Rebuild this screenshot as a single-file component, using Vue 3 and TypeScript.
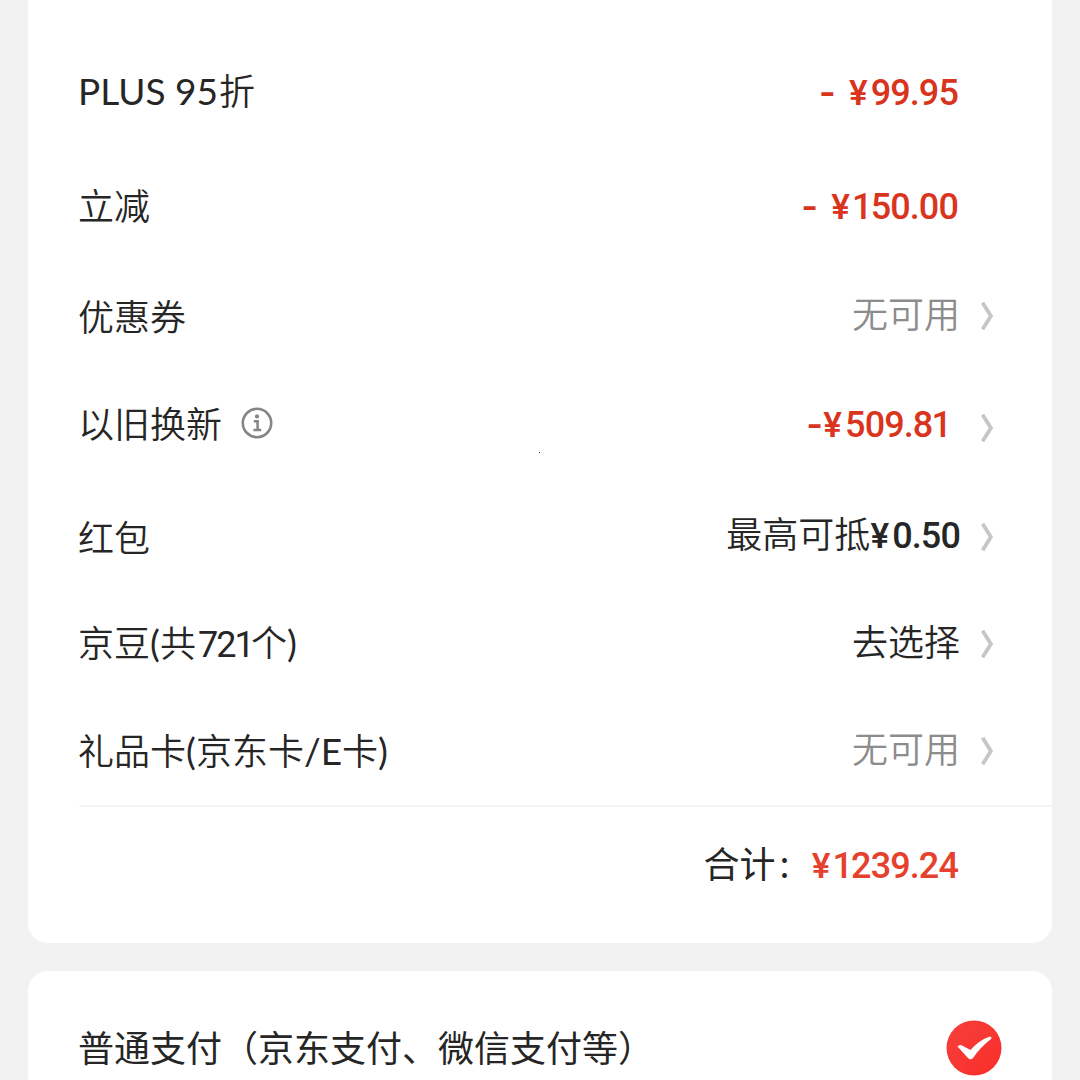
<template>
  <div class="checkout">
    <!-- Price detail -->
    <section class="card detail-card">
      <div v-for="row in rows" :key="row.id" class="row" :class="'row-' + row.id">
        <div class="label">
          <span v-for="(part, i) in row.label" :key="i" :class="part.kind">{{ part.text }}</span>
          <svg v-if="row.info" class="info-icon" viewBox="0 0 32 32" fill="none">
            <circle cx="16" cy="16" r="14.2" stroke="#858585" stroke-width="2.6" />
            <circle cx="16" cy="9.4" r="2.1" fill="#858585" />
            <path d="M12.8 14.2h3.8v8.6M12.4 22.9h7.8" stroke="#858585" stroke-width="2.5" />
          </svg>
        </div>
        <div class="value" :class="row.tone">
          <span v-for="(part, i) in row.value" :key="i" :class="part.kind">{{ part.text }}</span>
        </div>
        <div class="arrow">
          <svg v-if="row.arrow" width="14" height="30" viewBox="0 0 14 30" fill="none">
            <path d="M2.6 1.8L10.9 15L2.6 28.2" stroke="#c6c6c6" stroke-width="3.8" />
          </svg>
        </div>
      </div>

      <!-- Total -->
      <div class="total">
        <span class="total-label">合计</span>
        <span class="colon">:</span>
        <span class="total-price">
          <span v-for="(part, i) in price('¥1239.24')" :key="i" :class="part.kind">{{ part.text }}</span>
        </span>
      </div>
      <span class="speck"></span>
    </section>

    <!-- Payment method -->
    <section class="card pay-card" @click="checked = !checked">
      <span class="pay-name">普通支付（京东支付、微信支付等）</span>
      <svg class="check" viewBox="0 0 56 56">
        <defs>
          <linearGradient id="checkFill" x1="0" y1="0" x2="1" y2="1">
            <stop offset="0" stop-color="#f5403c" />
            <stop offset="1" stop-color="#fb2d29" />
          </linearGradient>
        </defs>
        <circle cx="28" cy="28" r="27.5" :fill="checked ? 'url(#checkFill)' : '#dddddd'" />
        <path
          d="M11.5 26.5Q13.5 24 16 25.5L24.5 30Q33 20.5 43 16.8Q46.5 16 45 19Q34 27.5 27 38Q24.5 40.500 22 38Z"
          fill="#fff"
        />
      </svg>
    </section>
  </div>
</template>

<script setup lang="ts">
import { ref } from 'vue'

interface Part {
  text: string
  kind: string
}

interface Row {
  id: string
  label: Part[]
  value: Part[]
  tone: 'red' | 'gray' | 'dark'
  arrow?: boolean
  info?: boolean
}

const cn = (text: string): Part => ({ text, kind: 'cn' })
const part = (text: string, kind: string): Part => ({ text, kind })

// The yen sign and the digit 1 have their own advance width
const price = (text: string): Part[] =>
  text
    .split(/(¥|1)/)
    .filter(Boolean)
    .map((t) => part(t, t === '¥' ? 'price yen' : t === '1' ? 'price one' : 'price'))

const checked = ref(true)

const rows: Row[] = [
  {
    id: 'plus',
    label: [part('PLUS 95', 'latin'), cn('折')],
    value: [part('-', 'dash'), ...price('¥99.95')],
    tone: 'red'
  },
  {
    id: 'instant',
    label: [cn('立减')],
    value: [part('-', 'dash'), ...price('¥150.00')],
    tone: 'red'
  },
  {
    id: 'coupon',
    label: [cn('优惠券')],
    value: [cn('无可用')],
    tone: 'gray',
    arrow: true
  },
  {
    id: 'tradein',
    label: [cn('以旧换新')],
    value: [part('-', 'dash'), ...price('¥509.81')],
    tone: 'red',
    arrow: true,
    info: true
  },
  {
    id: 'redpacket',
    label: [cn('红包')],
    value: [cn('最高可抵'), ...price('¥0.50')],
    tone: 'dark',
    arrow: true
  },
  {
    id: 'bean',
    label: [cn('京豆'), part('(', 'paren'), cn('共'), part('721', 'digits'), cn('个'), part(')', 'paren')],
    value: [cn('去选择')],
    tone: 'dark',
    arrow: true
  },
  {
    id: 'card',
    label: [
      cn('礼品卡'),
      part('(', 'paren'),
      cn('京东卡'),
      part('/E', 'latin'),
      cn('卡'),
      part(')', 'paren')
    ],
    value: [cn('无可用')],
    tone: 'gray',
    arrow: true
  }
]
</script>

<style>
body {
  background: #f2f2f2;
}
</style>

<style scoped>
.checkout {
  height: 1080px;
  padding: 0 28px;
  box-sizing: border-box;
  overflow: hidden;
  display: flex;
  flex-direction: column;
  gap: 28px;
  background: #f2f2f2;
  color: #262626;
  font-family: 'Noto Sans CJK SC', sans-serif;
  font-size: 36px;
  line-height: 52px;
  white-space: nowrap;
}

.card {
  background: #fff;
  box-sizing: border-box;
  flex-shrink: 0;
}

.detail-card {
  position: relative;
  height: 943px;
  padding: 39px 0 0 50px;
  border-radius: 0 0 20px 20px;
}

.row {
  display: flex;
  align-items: center;
  height: 107px;
}

.row-instant {
  margin-top: 7px;
}

.row-coupon,
.row-redpacket {
  margin-top: 2px;
}

.row-tradein {
  margin-top: 5px;
}

.label,
.value {
  display: flex;
  align-items: baseline;
}

.label {
  flex: 1;
  padding-bottom: 1px;
}

.row-plus .label,
.row-instant .label {
  padding-bottom: 5px;
}

.row-plus .value,
.row-instant .value {
  padding: 0 2px 1px 0;
}

.row-tradein .label {
  align-items: center;
  padding-bottom: 11px;
}

.row-tradein .value {
  padding: 0 10px 6px 0;
}

.row-redpacket .value {
  padding-bottom: 5px;
}

.row-coupon .value,
.row-bean .value,
.row-card .value {
  padding-bottom: 7px;
}

.cn {
  font-weight: 350;
}

.latin,
.paren {
  font-family: Lato, 'Noto Sans CJK SC', sans-serif;
  font-size: 37px;
  white-space: pre;
}

.row-plus .latin {
  padding-right: 1px;
}

.digits {
  width: 53px;
  padding-left: 2px;
  font-family: Roboto, 'Noto Sans CJK SC', sans-serif;
  font-weight: 400;
  letter-spacing: -2px;
}

.price {
  font-family: Roboto, 'Noto Sans CJK SC', sans-serif;
  font-size: 36px;
  font-weight: 500;
  letter-spacing: -0.9px;
}

.yen {
  width: 22px;
  font-family: Inter, sans-serif;
  font-size: 34px;
  font-weight: 600;
}

.one {
  margin: 0 -1px;
}

.dash {
  font-family: Inter, sans-serif;
  font-weight: 600;
  margin-right: 13px;
}

.row-tradein .dash {
  margin-right: 0;
}

.red {
  color: #d9341e;
}

.gray {
  color: #8c8c8c;
}

.info-icon {
  width: 32px;
  height: 32px;
  margin: 2px 0 0 19px;
}

.arrow {
  width: 92px;
  display: flex;
  box-sizing: border-box;
  padding-left: 20px;
}

.total {
  height: 113px;
  margin: 1px 0 0 1px;
  padding: 0 94px 3px 0;
  border-top: 2px solid #f5f5f5;
  display: flex;
  align-items: baseline;
  justify-content: flex-end;
  line-height: 110px;
}

.colon {
  width: 36px;
  box-sizing: border-box;
  padding-left: 4px;
}

.total-price {
  display: flex;
  align-items: baseline;
  color: #e6402e;
}

.speck {
  position: absolute;
  left: 511px;
  top: 452px;
  width: 1px;
  height: 1px;
  background: #333;
}

.pay-card {
  height: 154px;
  padding: 0 50px;
  border-radius: 20px 20px 0 0;
  display: flex;
  align-items: center;
  justify-content: space-between;
}

.pay-name {
  padding-bottom: 4px;
}

.check {
  width: 56px;
  height: 56px;
}
</style>
